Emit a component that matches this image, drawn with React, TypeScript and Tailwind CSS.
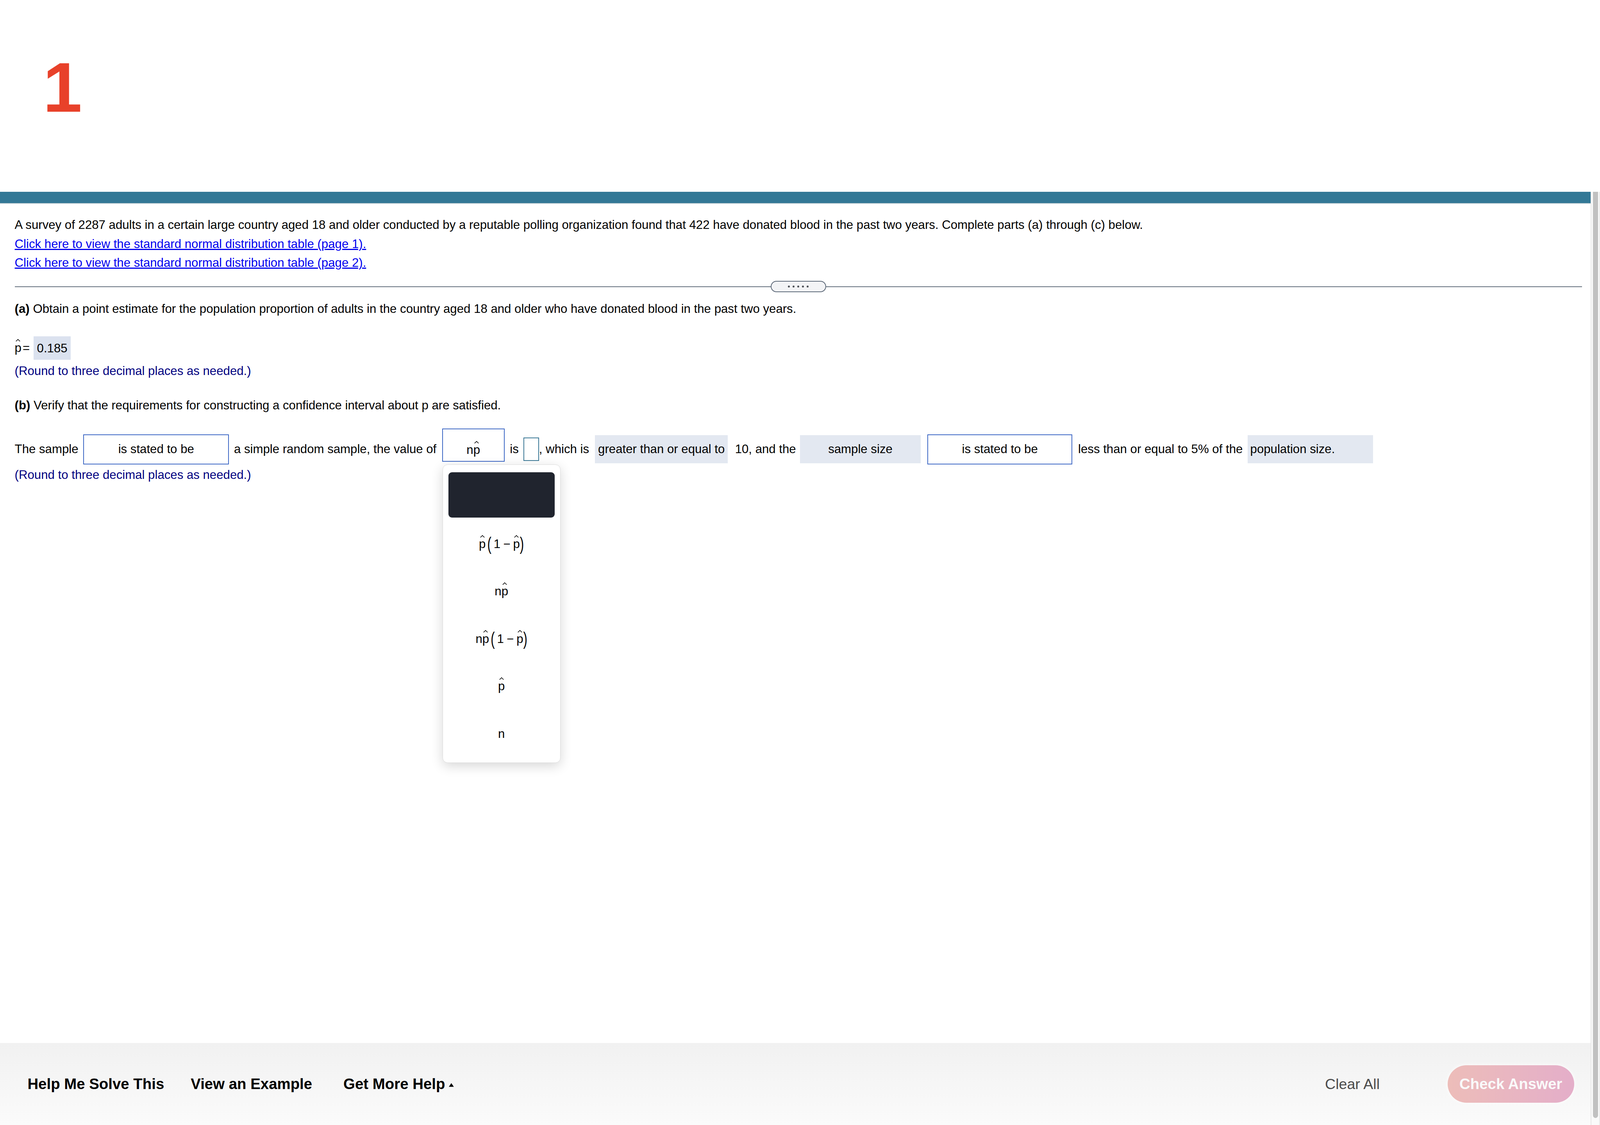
import type { ReactNode } from "react";

function Hat({ children }: { children: ReactNode }) {
  return (
    <span className="relative inline-block leading-[38.4px]">
      {children}
      <svg
        className="absolute left-1/2 top-[-4px] h-[6.4px] w-[12px] -translate-x-1/2"
        viewBox="0 0 15 8"
        fill="none"
      >
        <polyline points="1,7.5 7.5,1 14,7.5" stroke="#000" strokeWidth="2" />
      </svg>
    </span>
  );
}

function Paren({ children }: { children: ReactNode }) {
  return <span className="inline-block scale-y-[1.5]">{children}</span>;
}

function Dropdown() {
  const options: ReactNode[] = [
    <>
      <Hat>p</Hat>
      <span className="ml-[4px]"><Paren>(</Paren></span>
      <span className="ml-[6px]">1</span>
      <span className="mx-[7px]">−</span>
      <Hat>p</Hat>
      <Paren>)</Paren>
    </>,
    <>
      n<Hat>p</Hat>
    </>,
    <>
      n<Hat>p</Hat>
      <span className="ml-[4px]"><Paren>(</Paren></span>
      <span className="ml-[6px]">1</span>
      <span className="mx-[7px]">−</span>
      <Hat>p</Hat>
      <Paren>)</Paren>
    </>,
    <Hat>p</Hat>,
    <>n</>,
  ];

  return (
    <div className="absolute left-[-1px] top-[90px] z-10 w-[302px] rounded-[13px] border border-[#dcdcdc] bg-white px-[14px] pb-[12px] pt-[19px] shadow-[0_8px_30px_rgba(0,0,0,0.16)]">
      <div className="h-[116px] rounded-[9px] bg-[#20242e]" />
      <div className="mt-[7px] flex flex-col">
        {options.map((opt, i) => (
          <div key={i} className="flex h-[121.5px] items-center justify-center">
            <span className="whitespace-nowrap">{opt}</span>
          </div>
        ))}
      </div>
    </div>
  );
}

export default function App() {
  return (
    <div className="relative flex h-screen min-h-[2304px] w-[4096px] flex-col overflow-hidden bg-white font-['Liberation_Sans',Arial,sans-serif] text-black">
      {/* question number header */}
      <div className="h-[491px] shrink-0 pl-[110px] pt-[134px]">
        <span className="text-[180px] font-bold leading-[180px] text-[#e8412a]">1</span>
      </div>

      <div className="flex min-h-0 flex-1">
        <div className="flex w-[4072px] flex-col">
          <div className="h-[29px] bg-[#337896]" />
          <div className="h-[2px] bg-[#cfd8dc]" />

          <div className="flex-1 px-[37.6px] pt-[30px] text-[31.2px] leading-[48.5px]">
            <p>
              A survey of 2287 adults in a certain large country aged 18 and older conducted by a reputable polling
              organization found that 422 have donated blood in the past two years. Complete parts (a) through (c)
              below.
            </p>
            <p className="text-[#0000ee] underline">Click here to view the standard normal distribution table (page 1).</p>
            <p className="text-[#0000ee] underline">Click here to view the standard normal distribution table (page 2).</p>

            {/* collapse handle */}
            <div className="relative mt-[21px] flex h-[29px] w-[4012px] items-center justify-center">
              <div className="absolute inset-x-0 top-[14px] h-[2px] bg-[#64707d]" />
              <div className="relative flex h-[29px] w-[142px] items-center justify-center gap-[7px] rounded-full border-2 border-[#5f6b7a] bg-[#f3f4f6]">
                {[0, 1, 2, 3, 4].map((d) => (
                  <span key={d} className="h-[5px] w-[5px] rounded-full bg-[#4b4f55]" />
                ))}
              </div>
            </div>

            <p className="mt-[19px]">
              <span className="font-bold">(a)</span> Obtain a point estimate for the population proportion of adults in
              the country aged 18 and older who have donated blood in the past two years.
            </p>

            <div className="mt-[46px] flex h-[60px] items-center">
              <Hat>p</Hat>
              <span className="ml-[3px]">=</span>
              <span className="ml-[9.6px] flex h-[60px] items-center bg-[#dbe2ef] px-[8.8px] pt-[3px]">0.185</span>
            </div>
            <p className="mt-[4.75px] text-[#000080]">(Round to three decimal places as needed.)</p>

            <p className="mt-[39.5px]">
              <span className="font-bold">(b)</span> Verify that the requirements for constructing a confidence interval
              about p are satisfied.
            </p>

            <div className="mt-[48.75px] flex h-[78px] items-center whitespace-nowrap">
              <span>The sample</span>
              <div className="ml-[12.8px] flex h-[77px] w-[372.8px] items-center justify-center border-2 border-[#3f69c5]">
                is stated to be
              </div>
              <span className="ml-[12.8px]">a simple random sample, the value of</span>
              <div className="relative mb-[21px] ml-[14.4px] flex h-[85px] w-[160px] items-end justify-center border-2 border-[#3f69c5] pb-[4px]">
                <span>
                  n<Hat>p</Hat>
                </span>
                <Dropdown />
              </div>
              <span className="ml-[13.6px]">is</span>
              <div className="ml-[12px] h-[60px] w-[40px] border-2 border-[#3a7896]" />
              <span>, which is</span>
              <div className="ml-[15.2px] flex h-[72px] w-[340px] items-center justify-center bg-[#e3e8f1]">
                greater than or equal to
              </div>
              <span className="ml-[18.4px]">10, and the</span>
              <div className="ml-[10.4px] flex h-[72px] w-[308.8px] items-center justify-center bg-[#e3e8f1]">
                sample size
              </div>
              <div className="ml-[17.6px] flex h-[77px] w-[370.4px] items-center justify-center border-2 border-[#3f69c5]">
                is stated to be
              </div>
              <span className="ml-[15.2px]">less than or equal to 5% of the</span>
              <div className="ml-[12.8px] flex h-[72px] w-[320.8px] items-center bg-[#e3e8f1] pl-[6.4px]">
                population size.
              </div>
            </div>
            <p className="mt-[2.75px] text-[#000080]">(Round to three decimal places as needed.)</p>
          </div>

          {/* footer */}
          <div className="flex h-[210px] shrink-0 items-center bg-linear-to-b from-[#f1f1f1] to-[#fbfbfb] pl-[70.4px] pr-[42.4px] text-[38.4px]">
            <span className="font-bold">Help Me Solve This</span>
            <span className="ml-[68px] font-bold">View an Example</span>
            <span className="ml-[80px] flex items-center font-bold">
              Get More Help
              <svg className="ml-[9.6px] mt-[4.8px] h-[11px] w-[12.8px]" viewBox="0 0 16 12">
                <polygon points="8,0 16,12 0,12" fill="#000" />
              </svg>
            </span>
            <span className="ml-auto text-[37.6px] text-[#4b4b4b]">Clear All</span>
            <button className="ml-[173.6px] flex h-[96px] w-[324px] items-center justify-center rounded-full bg-linear-to-r from-[#edbdb9] to-[#e4aec9] font-bold text-[#fafafa] shadow-[0_0_12px_rgba(255,255,255,0.9)]">
              Check Answer
            </button>
          </div>
        </div>

        {/* scrollbar */}
        <div className="flex w-[24px] flex-col border-l-2 border-r-2 border-[#e8e8e8] bg-[#fafafa]">
          <div className="mb-[18px] ml-[4px] w-[13px] flex-1 rounded-b-full bg-[#c1c1c1]" />
        </div>
      </div>
    </div>
  );
}
